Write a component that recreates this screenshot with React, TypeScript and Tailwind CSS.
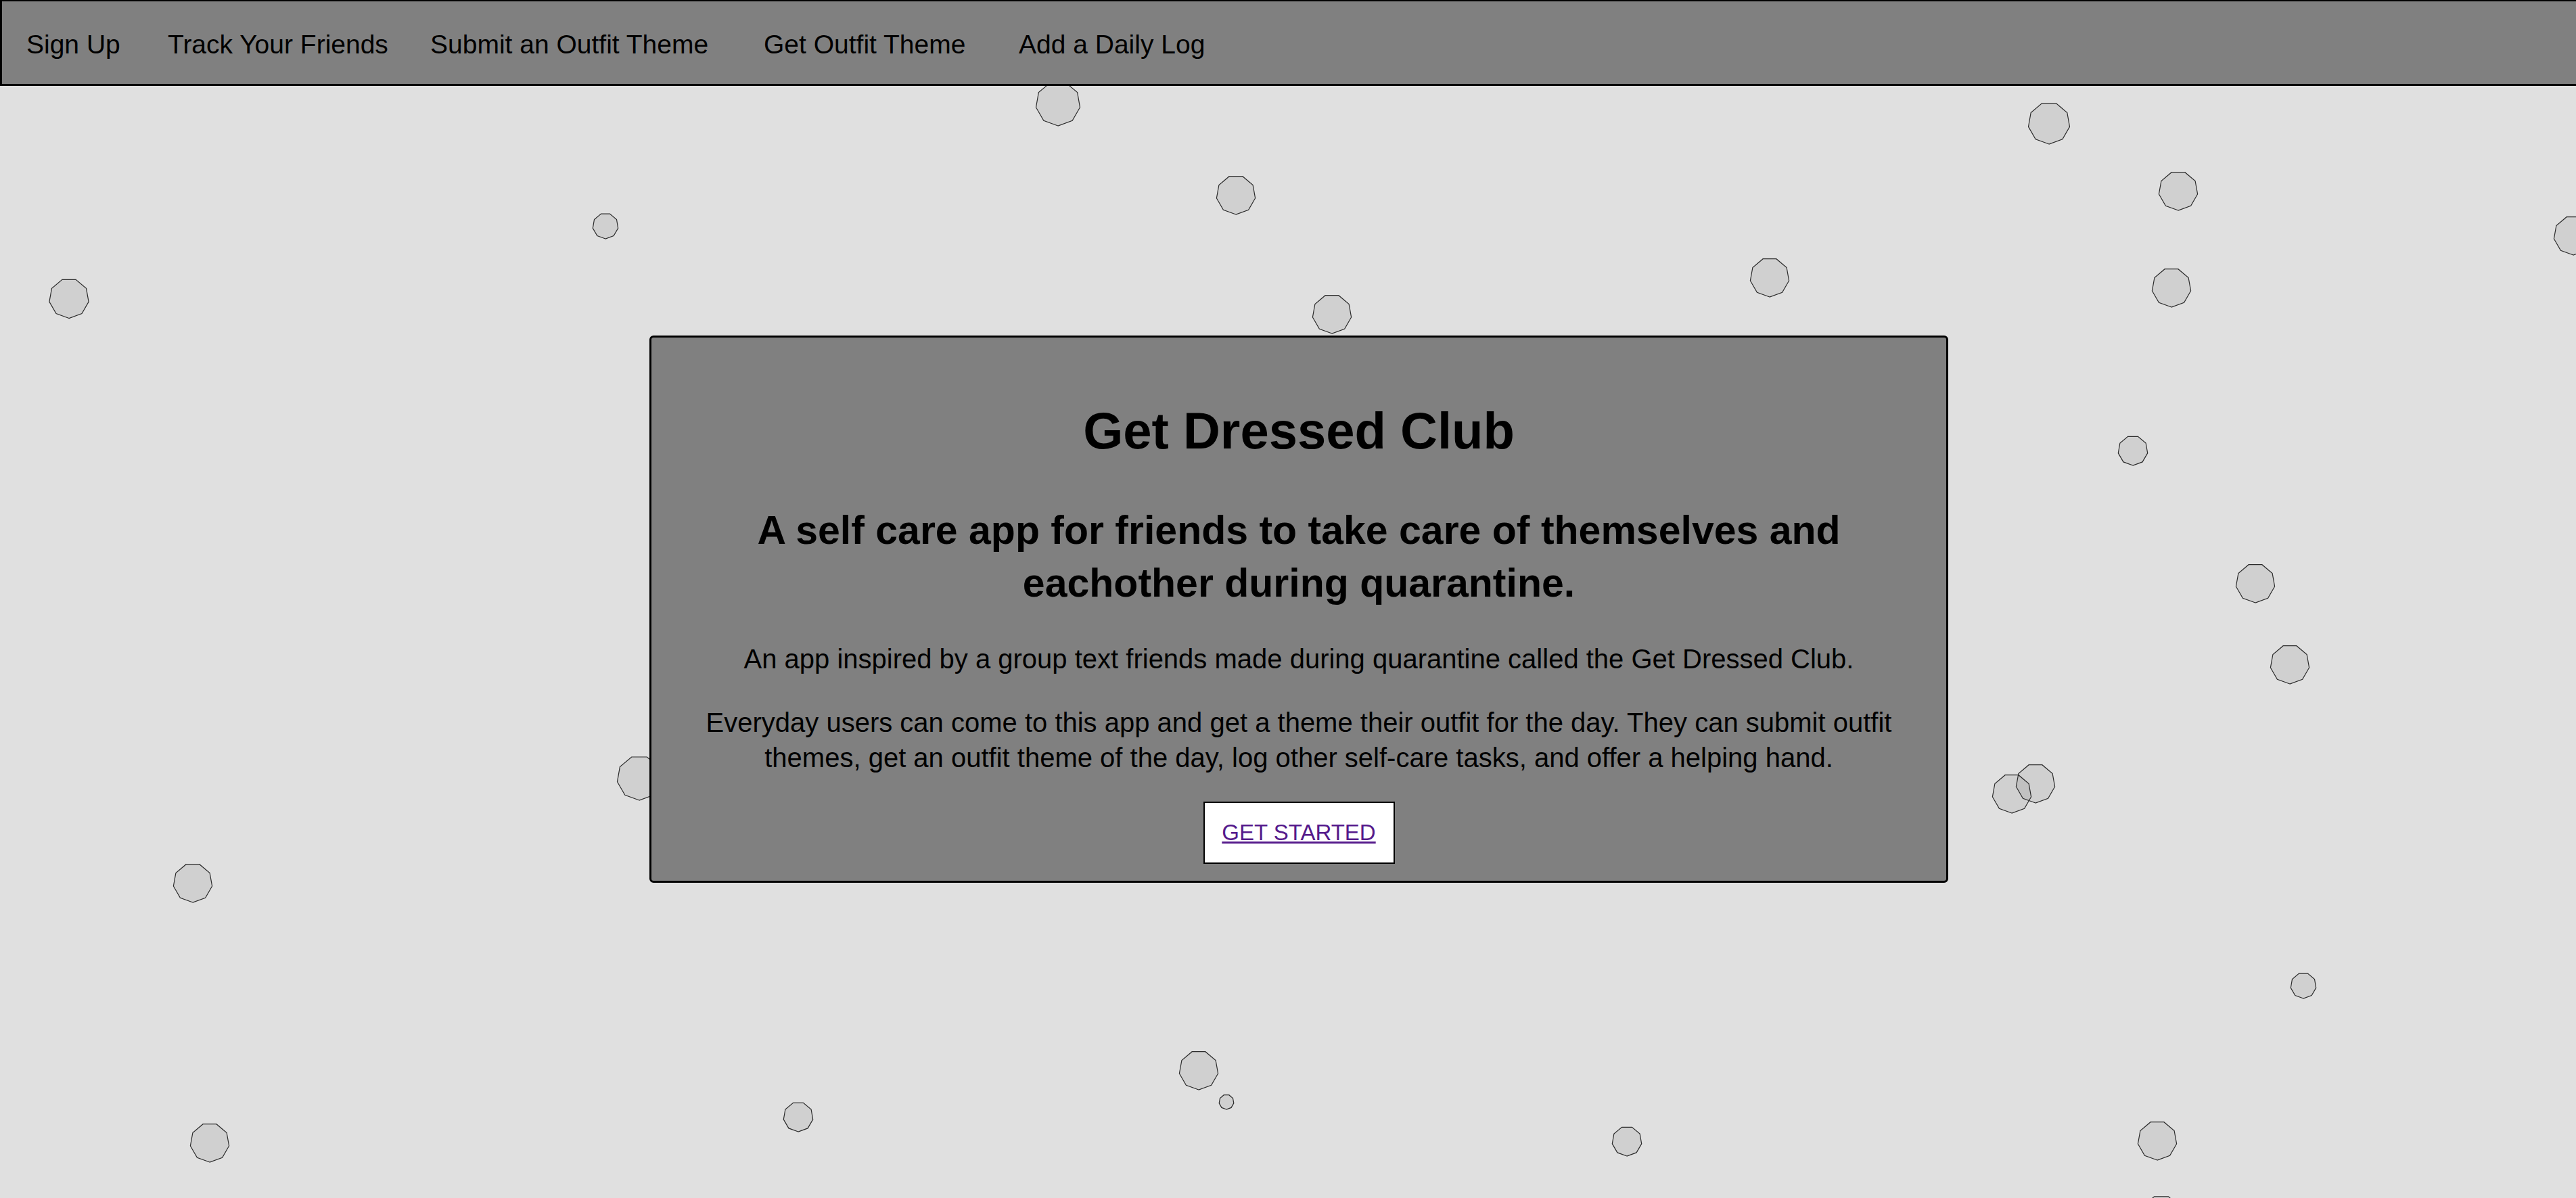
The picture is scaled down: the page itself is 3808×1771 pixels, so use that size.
const links = [
  { label: "Sign Up", w: "w-[209px]" },
  { label: "Track Your Friends", w: "w-[388px]" },
  { label: "Submit an Outfit Theme", w: "w-[493px]" },
  { label: "Get Outfit Theme", w: "w-[377px]" },
  { label: "Add a Daily Log", w: "w-auto" },
];

// floating shapes on the background canvas: [cx, cy, r]
const bubbles: [number, number, number][] = [
  [1564, 153, 33],
  [1827, 288, 29],
  [1969, 464, 29],
  [895, 334, 19],
  [102, 441, 29.5],
  [2616, 410, 29],
  [3029, 182, 31],
  [3220, 282, 29],
  [3210, 425, 29],
  [3804, 348, 29],
  [3153, 666, 22],
  [3334, 862, 29],
  [3385, 982, 29],
  [2974, 1173, 29],
  [3009, 1158, 29],
  [945, 1150, 33],
  [285, 1305, 29],
  [3405, 1457, 19],
  [1772, 1582, 29],
  [1813, 1629, 11],
  [1180, 1651, 22],
  [310, 1689, 29],
  [2405, 1687, 22],
  [3189, 1686, 29],
  [3195, 1797, 30],
];

function ninePoints(cx: number, cy: number, r: number) {
  return Array.from({ length: 9 }, (_, i) => {
    const a = Math.PI / 2 + (i * 2 * Math.PI) / 9;
    return `${(cx + r * Math.cos(a)).toFixed(1)},${(cy + r * Math.sin(a)).toFixed(1)}`;
  }).join(" ");
}

export default function App() {
  return (
    <div className="relative min-h-screen overflow-hidden bg-[#e0e0e0] font-['Liberation_Sans',Arial,sans-serif] text-black">
      {/* Background shapes */}
      <svg className="pointer-events-none absolute inset-0 h-full w-full">
        {bubbles.map(([cx, cy, r], i) => (
          <polygon
            key={i}
            points={ninePoints(cx, cy, r)}
            fill="rgba(0,0,0,0.07)"
            stroke="#2a2a2a"
            strokeWidth={1.2}
          />
        ))}
      </svg>

      {/* Nav */}
      <nav className="relative z-10 flex h-[127px] border-t-2 border-b-[3px] border-l-[3px] border-black bg-[#808080] pt-[41px] pl-[36px] text-[39px] leading-[45px]">
        {links.map((link) => (
          <a key={link.label} href="#" className={`${link.w} shrink-0 whitespace-nowrap text-black no-underline`}>
            {link.label}
          </a>
        ))}
      </nav>

      {/* Hero card */}
      <div className="relative z-10 flex justify-center pt-[369px] pl-[32px]">
        <section className="w-[1920px] rounded-[6px] border-[3px] border-black bg-[#808080] px-[40px] pt-[92px] pb-[25px] text-center">
          <h1 className="text-[76px] leading-[92px] font-bold">Get Dressed Club</h1>
          <h2 className="mt-[62px] text-[59px] leading-[78px] font-bold">
            A self care app for friends to take care of themselves and
            <br />
            eachother during quarantine.
          </h2>
          <p className="mt-[47px] text-[40px] leading-[52px]">
            An app inspired by a group text friends made during quarantine called the Get Dressed Club.
          </p>
          <p className="mt-[42px] text-[40px] leading-[52px]">
            Everyday users can come to this app and get a theme their outfit for the day. They can submit outfit
            <br />
            themes, get an outfit theme of the day, log other self-care tasks, and offer a helping hand.
          </p>
          <div className="mt-[39px] flex justify-center">
            <button className="flex h-[92px] w-[283px] items-center justify-center border-2 border-black bg-white">
              <a href="#" className="text-[33px] text-[#551a8b] underline">
                GET STARTED
              </a>
            </button>
          </div>
        </section>
      </div>
    </div>
  );
}
